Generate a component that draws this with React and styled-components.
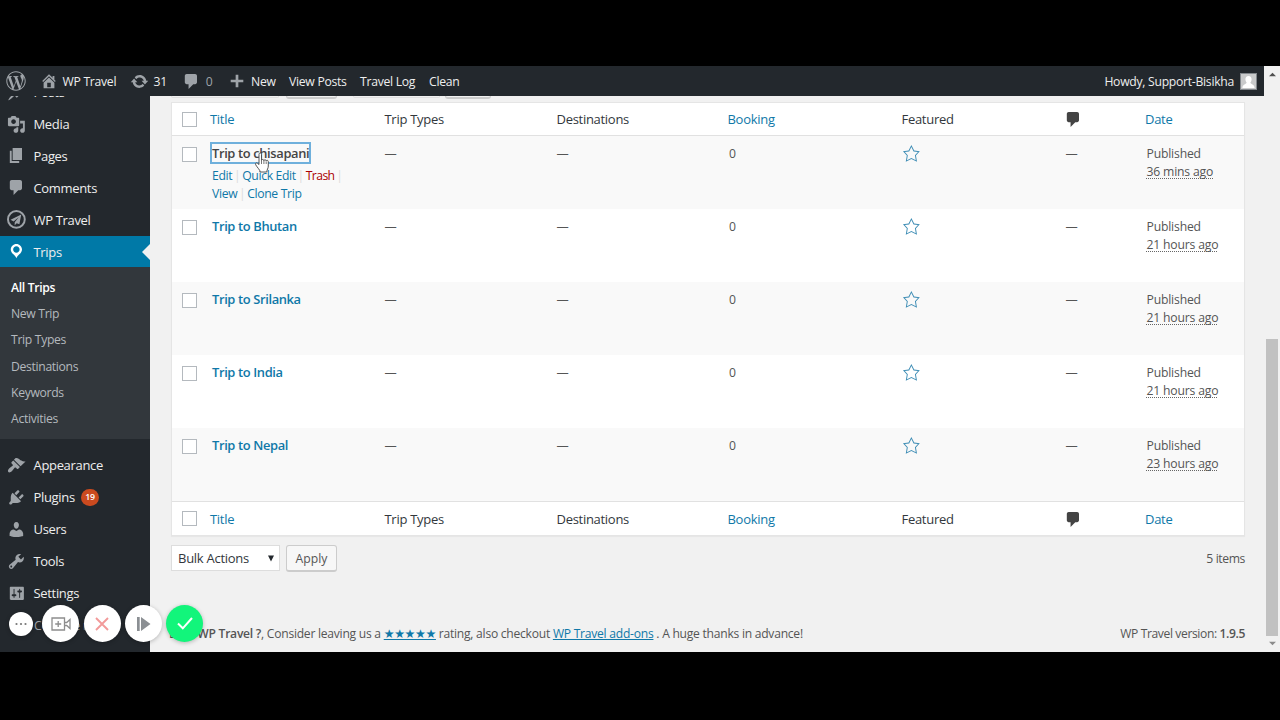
import React from 'react';
import styled, { createGlobalStyle } from 'styled-components';
import { FaWordpressSimple } from 'react-icons/fa';

const icons = {
  home: 'M16 8.5l1.53 1.53-1.06 1.06L10 4.6l-6.47 6.49-1.06-1.06L10 2.5l4 4v-2h2v4zm-6-2.46l6 5.99V18H4v-5.97zM12 17v-5H8v5h4z',
  update: 'M10.2 3.28c3.53 0 6.43 2.61 6.92 6h2.08l-3.5 4-3.5-4h2.32c-.45-1.97-2.21-3.45-4.32-3.45-1.45 0-2.73.71-3.54 1.78L4.95 5.66C6.23 4.2 8.11 3.28 10.2 3.28zm-.4 13.44c-3.52 0-6.43-2.61-6.92-6H.8l3.5-4c1.17 1.33 2.33 2.67 3.5 4H5.48c.45 1.97 2.21 3.45 4.32 3.45 1.45 0 2.73-.71 3.54-1.78l1.71 1.95c-1.28 1.46-3.15 2.38-5.25 2.38z',
  plus: 'M17 8.5v3h-5.5V17h-3v-5.5H3v-3h5.5V3h3v5.5z',
  comments: 'M5 2h9c1.1 0 2 .9 2 2v7c0 1.1-.9 2-2 2h-2l-5 5v-5H5c-1.1 0-2-.9-2-2V4c0-1.1.9-2 2-2z',
  post: 'M10.44 3.02l1.82-1.82 6.36 6.35-1.83 1.82c-1.05-.68-2.48-.57-3.41.36l-.75.75c-.92.93-1.04 2.35-.35 3.41l-1.83 1.82-2.41-2.41-2.8 2.79c-.42.42-3.38 2.71-3.8 2.29s1.86-3.39 2.28-3.81l2.79-2.79L4.1 9.36l1.83-1.82c1.05.69 2.48.57 3.4-.36l.75-.75c.93-.92 1.05-2.35.36-3.41z',
  media: 'M13 11V4c0-.55-.45-1-1-1h-1.67L9 1H5L3.67 3H2c-.55 0-1 .45-1 1v7c0 .55.45 1 1 1h10c.55 0 1-.45 1-1zM7 4.5c1.38 0 2.5 1.12 2.5 2.5S8.38 9.5 7 9.5 4.5 8.38 4.5 7 5.62 4.5 7 4.5zM14 6h5v10.5c0 1.38-1.12 2.5-2.5 2.5S14 17.88 14 16.5s1.12-2.5 2.5-2.5c.17 0 .34.02.5.05V9h-3V6zm-4 8.05V13h2v3.5c0 1.38-1.12 2.5-2.5 2.5S7 17.88 7 16.5 8.12 14 9.5 14c.17 0 .34.02.5.05z',
  page: 'M6 15V2h10v13H6zm-1 1h8v2H3V5h2v11z',
  travel: 'M10 0a10 10 0 1 0 0 20 10 10 0 0 0 0-20zm0 2.1a7.9 7.9 0 1 1 0 15.8 7.9 7.9 0 0 1 0-15.8zM15.2 4.8L3.8 10.5l3.2 1.7 5.5-4.5L8.2 13v3.2l2.2-2.2 2.8 1.3z',
  trips: 'M10 2C6.69 2 4 4.69 4 8c0 2.02 1.17 3.71 2.53 4.89.43.37 1.18.96 1.85 1.83.74.97 1.41 2.01 1.62 2.71.21-.7.88-1.74 1.62-2.71.67-.87 1.42-1.46 1.85-1.83C14.83 11.71 16 10.02 16 8c0-3.31-2.69-6-6-6zm0 2.56c1.9 0 3.44 1.54 3.44 3.44S11.9 11.44 10 11.44 6.56 9.9 6.56 8 8.1 4.56 10 4.56z',
  appearance: 'M14.48 11.06L7.41 3.99l1.5-1.5c.5-.56 2.3-.47 3.51.32 1.21.8 1.43 1.28 2.91 2.1 1.18.64 2.45 1.26 4.45.85zm-.71.71L6.7 4.7 4.93 6.47c-.39.39-.39 1.02 0 1.41l1.06 1.06c.39.39.39 1.03 0 1.42-.6.6-1.43 1.11-2.21 1.69-.35.26-.7.53-1.01.84C1.43 14.23.4 16.08 1.4 17.07c.99 1 2.84-.03 4.18-1.36.31-.31.58-.66.85-1.02.57-.78 1.08-1.61 1.69-2.21.39-.39 1.02-.39 1.41 0l1.06 1.06c.39.39 1.02.39 1.41 0z',
  plugins: 'M13.11 4.36L9.87 7.6 8 5.73l3.24-3.24c.35-.34 1.05-.2 1.56.32.52.51.66 1.21.31 1.55zm-8 1.77l.91-1.12 9.01 9.01-1.19.84c-.71.71-2.63 1.16-3.82 1.16H6.14L4.9 17.26c-.59.59-1.54.59-2.12 0-.59-.58-.59-1.53 0-2.12l1.24-1.24v-3.88c0-1.13.4-3.19 1.09-3.89zm7.26 3.97l3.24-3.24c.34-.35 1.04-.21 1.55.31.52.51.66 1.21.31 1.55l-3.24 3.25z',
  users: 'M10 9.25c-2.27 0-2.73-3.44-2.73-3.44C7 4.02 7.82 2 9.97 2c2.16 0 2.98 2.02 2.71 3.81 0 0-.41 3.44-2.68 3.44zm0 2.57L12.72 10c2.39 0 4.52 2.33 4.52 4.53v2.49s-3.65 1.13-7.24 1.13c-3.65 0-7.24-1.13-7.24-1.13v-2.49c0-2.25 1.94-4.48 4.47-4.48z',
  tools: 'M16.68 9.77c-1.34 1.34-3.3 1.67-4.95.99l-5.41 6.52c-.99.99-2.59.99-3.58 0s-.99-2.59 0-3.57l6.52-5.42c-.68-1.65-.35-3.61.99-4.95 1.28-1.28 3.12-1.62 4.72-1.06l-2.89 2.89 2.82 2.82 2.86-2.87c.53 1.58.18 3.39-1.08 4.65zM3.81 16.21c.4.39 1.04.39 1.43 0 .4-.4.4-1.04 0-1.43-.39-.4-1.03-.4-1.43 0-.39.39-.39 1.03 0 1.43z',
  settings: 'M18 16V4c0-.55-.45-1-1-1H4c-.55 0-1 .45-1 1v12c0 .55.45 1 1 1h13c.55 0 1-.45 1-1zM8 11h1c.55 0 1 .45 1 1s-.45 1-1 1H8v1.5c0 .28-.22.5-.5.5s-.5-.22-.5-.5V13H6c-.55 0-1-.45-1-1s.45-1 1-1h1V5.5c0-.28.22-.5.5-.5s.5.22.5.5V11zm5-2h-1c-.55 0-1-.45-1-1s.45-1 1-1h1V5.5c0-.28.22-.5.5-.5s.5.22.5.5V7h1c.55 0 1 .45 1 1s-.45 1-1 1h-1v5.5c0 .28-.22.5-.5.5s-.5-.22-.5-.5V9z',
  star: 'M10 1L7 7l-6 .75 4.13 4.62L4 19l6-3 6 3-1.12-6.63L19 7.75 13 7zm0 2.24l2.34 4.69 4.65.58-3.18 3.56.87 5.15L10 14.88l-4.68 2.34.87-5.15-3.18-3.56 4.65-.58z',
};

const Icon = ({ name, size = 18.75 }) => (
  <svg width={size} height={size} viewBox="0 0 20 20" fill="currentColor" fillRule="evenodd">
    <path d={icons[name]} />
  </svg>
);

const menuTop = [
  { icon: 'media', label: 'Media' },
  { icon: 'page', label: 'Pages' },
  { icon: 'comments', label: 'Comments' },
  { icon: 'travel', label: 'WP Travel' },
  { icon: 'trips', label: 'Trips', active: true },
];

const submenu = ['All Trips', 'New Trip', 'Trip Types', 'Destinations', 'Keywords', 'Activities'];

const menuBottom = [
  { icon: 'appearance', label: 'Appearance' },
  { icon: 'plugins', label: 'Plugins', count: 19 },
  { icon: 'users', label: 'Users' },
  { icon: 'tools', label: 'Tools' },
  { icon: 'settings', label: 'Settings' },
];

const trips = [
  { title: 'Trip to chisapani', date: '36 mins ago', focused: true },
  { title: 'Trip to Bhutan', date: '21 hours ago' },
  { title: 'Trip to Srilanka', date: '21 hours ago' },
  { title: 'Trip to India', date: '21 hours ago' },
  { title: 'Trip to Nepal', date: '23 hours ago' },
];

const MenuItem = ({ item }) => (
  <MenuRow $active={item.active}>
    <MenuIcon $active={item.active}>
      <Icon name={item.icon} />
    </MenuIcon>
    {item.label}
    {item.count && <Count>{item.count}</Count>}
    {item.active && <Arrow />}
  </MenuRow>
);

const HeadRow = ({ foot }) => (
  <Head $foot={foot}>
    <Check />
    <HeadCell $link>Title</HeadCell>
    <HeadCell>Trip Types</HeadCell>
    <HeadCell>Destinations</HeadCell>
    <HeadCell $link>Booking</HeadCell>
    <HeadCell>Featured</HeadCell>
    <HeadCell>
      <CommentHead>
        <Icon name="comments" size={18.75} />
      </CommentHead>
    </HeadCell>
    <HeadCell $link>Date</HeadCell>
  </Head>
);

const TripRow = ({ trip }) => (
  <Row>
    <Check />
    <TitleCell>
      <TripTitle $focused={trip.focused}>{trip.title}</TripTitle>
      {trip.focused && (
        <Actions>
          <div>
            <a>Edit</a>
            <Bar>|</Bar>
            <a>Quick Edit</a>
            <Bar>|</Bar>
            <Trash>Trash</Trash>
            <Bar>|</Bar>
          </div>
          <div>
            <a>View</a>
            <Bar>|</Bar>
            <a>Clone Trip</a>
          </div>
        </Actions>
      )}
    </TitleCell>
    <Cell>—</Cell>
    <Cell>—</Cell>
    <Cell $inset={1.5}>0</Cell>
    <Cell>
      <Star>
        <Icon name="star" />
      </Star>
    </Cell>
    <Cell>—</Cell>
    <Cell $inset={1.5}>
      Published
      <br />
      <DateText>{trip.date}</DateText>
    </Cell>
  </Row>
);

const App = () => (
  <Page>
    <GlobalStyle />
    <Screen>
      <Main>
        <AdminBar>
          <BarItem $w={39.5} $pad={6} $muted>
            <FaWordpressSimple size={20} />
          </BarItem>
          <BarItem $w={90.5} $gap={5}>
            <Icon name="home" size={18} />
            WP Travel
          </BarItem>
          <BarItem $w={52} $gap={4.5}>
            <Icon name="update" size={19} />
            31
          </BarItem>
          <BarItem $w={46} $gap={5} $muted>
            <Icon name="comments" />
            0
          </BarItem>
          <BarItem $w={61} $gap={5}>
            <Icon name="plus" size={18} />
            New
          </BarItem>
          <BarItem $w={71}>View Posts</BarItem>
          <BarItem $w={69}>Travel Log</BarItem>
          <BarItem>Clean</BarItem>
          <Account>
            Howdy, Support-Bisikha
            <Avatar viewBox="0 0 16 16">
              <rect width="16" height="16" fill="#c9cacb" />
              <path
                d="M8 2c2.2 0 3.3 1.6 3.3 3.5 0 1.7-.7 2.8-1.3 3.6 0 1.6 4.5 2 4.5 5.9h-13c0-3.9 4.5-4.3 4.5-5.9-.6-.8-1.3-1.9-1.3-3.6C4.7 3.6 5.8 2 8 2z"
                fill="#fff"
              />
            </Avatar>
          </Account>
        </AdminBar>
        <Body>
          <Sidebar>
            <Posts>
              <MenuItem item={{ icon: 'post', label: 'Posts' }} />
            </Posts>
            {menuTop.map((item) => (
              <MenuItem item={item} key={item.label} />
            ))}
            <Submenu>
              {submenu.map((label, i) => (
                <SubItem $current={i === 0} key={label}>
                  {label}
                </SubItem>
              ))}
            </Submenu>
            {menuBottom.map((item) => (
              <MenuItem item={item} key={item.label} />
            ))}
            <Collapse>Collapse menu</Collapse>
          </Sidebar>
          <Content>
            <Filters>
              <FilterEdge $w={108} />
              <FilterEdge $w={51} $left={7} $button />
              <FilterEdge $w={87} $left={16} />
              <FilterEdge $w={46} $left={5} $button />
            </Filters>
            <Table>
              <HeadRow />
              {trips.map((trip) => (
                <TripRow trip={trip} key={trip.title} />
              ))}
              <HeadRow foot />
            </Table>
            <BulkBar>
              <Select>
                Bulk Actions
                <svg width="6" height="7" viewBox="0 0 6 7">
                  <path d="M0 .5h6L3 6.5z" fill="#23282d" />
                </svg>
              </Select>
              <Apply>Apply</Apply>
              <Items>5 items</Items>
            </BulkBar>
            <Footer>
              <div>
                Love <b>WP Travel ?</b>, Consider leaving us a <Stars>★★★★★</Stars> rating, also checkout{' '}
                <u>WP Travel add-ons</u> . A huge thanks in advance!
              </div>
              <Version>
                WP Travel version: <b>1.9.5</b>
              </Version>
            </Footer>
          </Content>
        </Body>
      </Main>
      <Scrollbar>
        <svg width="7" height="5" viewBox="0 0 8 5">
          <path d="M0 4.5L4 .5l4 4z" fill="#505050" />
        </svg>
        <Thumb />
        <svg width="7" height="5" viewBox="0 0 8 5">
          <path d="M0 .5h8l-4 4z" fill="#8b8b8b" />
        </svg>
      </Scrollbar>
      <Recorder>
        <Round $size={24}>
          <svg width="12" height="4" viewBox="0 0 12 4" fill="#777">
            <circle cx="1.5" cy="2" r="1.1" />
            <circle cx="6" cy="2" r="1.1" />
            <circle cx="10.5" cy="2" r="1.1" />
          </svg>
        </Round>
        <Round $size={37}>
          <svg width="20" height="14" viewBox="0 0 20 14" fill="none" stroke="#8d8d8d" strokeWidth="1.3">
            <path d="M1 1h12.5v12H1zM7.2 4v6M4.2 7h6M13.5 5.5h2.2l3.3-3v9l-3.3-3h-2.2" />
          </svg>
        </Round>
        <Round $size={37}>
          <svg width="14" height="14" viewBox="0 0 14 14" fill="none" stroke="#f29a9a" strokeWidth="1.9">
            <path d="M1 1l12 12M13 1L1 13" />
          </svg>
        </Round>
        <Round $size={37}>
          <svg width="15" height="14" viewBox="0 0 15 14" fill="#8b8f93">
            <path d="M1 0h2.7v14H1zM5 0l9.5 7L5 14z" />
          </svg>
        </Round>
        <Round $size={37} $green>
          <svg width="16" height="13" viewBox="0 0 16 13" fill="none" stroke="#fff" strokeWidth="2">
            <path d="M1 6.5l4.8 4.8L15 1" />
          </svg>
        </Round>
      </Recorder>
      <Pointer viewBox="0 0 16 22">
        <path
          d="M5 12.5V2.5c0-2 2.5-2 2.5 0v6c0-1.5 2.3-1.5 2.4.2 0-1.3 2.2-1.3 2.3.4.2-1.2 2.1-1 2.1.6V14c0 2.5-1.5 3.5-1.5 6H6.2c0-2-3-4.5-4.5-7.2-.8-1.6.8-2.5 1.9-1.4z"
          fill="#fff"
          stroke="#444"
          strokeWidth=".9"
        />
        <path d="M7.5 8.5V12M9.9 9v3M12.2 9.5V12" stroke="#555" strokeWidth=".8" />
      </Pointer>
    </Screen>
  </Page>
);

const GlobalStyle = createGlobalStyle`
  body {
    margin: 0;
    background: #000;
  }
  * {
    box-sizing: border-box;
  }
  svg {
    display: block;
    flex-shrink: 0;
  }
`;

const Page = styled.div`
  height: 720px;
  padding: 66px 0 68px;
  overflow: hidden;
  background: #000;
  font-family: 'Open Sans', 'Noto Sans', sans-serif;
`;

const Screen = styled.div`
  position: relative;
  display: flex;
  height: 586px;
  overflow: hidden;
  background: #f1f1f1;
`;

const Main = styled.div`
  width: 1264px;
  display: flex;
  flex-direction: column;
`;

const AdminBar = styled.div`
  display: flex;
  height: 30px;
  flex-shrink: 0;
  background: #23282d;
  color: #eee;
  font-size: 12.2px;
  letter-spacing: -0.28px;
`;

const BarItem = styled.div`
  display: flex;
  align-items: center;
  gap: ${({ $gap }) => $gap || 0}px;
  width: ${({ $w }) => ($w ? `${$w}px` : 'auto')};
  padding-left: ${({ $pad }) => $pad || 0}px;
  white-space: nowrap;
  color: ${({ $muted }) => ($muted ? '#9ea3a8' : '#eee')};
  svg {
    color: #9ea3a8;
  }
`;

const Account = styled.div`
  display: flex;
  align-items: center;
  gap: 6px;
  margin-left: auto;
  padding-right: 7px;
`;

const Avatar = styled.svg`
  width: 17px;
  height: 17px;
  border: 1px solid #82878c;
`;

const Body = styled.div`
  display: flex;
  height: 556px;
`;

const Sidebar = styled.div`
  width: 150px;
  height: 556px;
  overflow: hidden;
  background: #23282d;
`;

const Posts = styled.div`
  display: flex;
  align-items: flex-end;
  height: 12px;
  overflow: hidden;
`;

const MenuRow = styled.div`
  position: relative;
  display: flex;
  align-items: center;
  flex-shrink: 0;
  width: 150px;
  height: 31.9px;
  background: ${({ $active }) => ($active ? '#0079a7' : 'transparent')};
  color: #eee;
  font-size: 13px;
  letter-spacing: -0.33px;
`;

const MenuIcon = styled.div`
  width: 33.5px;
  padding-left: 7px;
  color: ${({ $active }) => ($active ? '#fff' : '#9ea3a8')};
`;

const Count = styled.span`
  height: 17px;
  margin-left: 6px;
  padding: 0 4.5px;
  border-radius: 9px;
  background: #ca4a1f;
  color: #fff;
  font-size: 8.8px;
  font-weight: 600;
  line-height: 17px;
  letter-spacing: -0.2px;
`;

const Arrow = styled.div`
  position: absolute;
  right: 0;
  top: 8px;
  border: 8px solid transparent;
  border-right-color: #f1f1f1;
  border-left-width: 0;
`;

const Submenu = styled.div`
  height: 171.5px;
  margin-bottom: 10.5px;
  padding-top: 7.5px;
  background: #32373c;
`;

const SubItem = styled.div`
  height: 26.25px;
  padding-left: 11px;
  color: ${({ $current }) => ($current ? '#fff' : '#b4b9be')};
  font-size: 12.2px;
  font-weight: ${({ $current }) => ($current ? 600 : 400)};
  line-height: 26.5px;
  letter-spacing: -0.33px;
`;

const Collapse = styled.div`
  padding-left: 34px;
  color: #a0a5aa;
  font-size: 12.2px;
  line-height: 33px;
  letter-spacing: -0.25px;
`;

const Content = styled.div`
  width: 1114px;
  height: 556px;
  padding: 0 19px 0 21px;
  color: #555;
  font-size: 12.2px;
`;

const Filters = styled.div`
  display: flex;
  height: 6px;
  align-items: flex-start;
`;

const FilterEdge = styled.div`
  width: ${({ $w }) => $w}px;
  height: ${({ $button }) => ($button ? 3 : 2)}px;
  margin-left: ${({ $left }) => $left || 0}px;
  border: 1px solid ${({ $button }) => ($button ? '#ccc' : '#e0e0e0')};
  border-top: 0;
  border-bottom-width: ${({ $button }) => ($button ? 2 : 1)}px;
  border-radius: 0 0 3px 3px;
`;

const Table = styled.div`
  width: 1074px;
  border: 1px solid #e5e5e5;
  background: #fff;
  box-shadow: 0 1px 1px rgba(0, 0, 0, 0.04);
`;

const columns = `
  display: grid;
  grid-template-columns: 38px 174.5px 172px 171px 174px 164px 79.5px 1fr;
`;

const Head = styled.div`
  ${columns}
  align-items: center;
  height: ${({ $foot }) => ($foot ? 34 : 33)}px;
  border-${({ $foot }) => ($foot ? 'top' : 'bottom')}: 1px solid #e1e1e1;
`;

const HeadCell = styled.div`
  color: ${({ $link }) => ($link ? '#0f78a8' : '#32373c')};
  font-size: 13px;
  letter-spacing: -0.29px;
`;

const CommentHead = styled.div`
  margin-left: -1.5px;
  color: #444;
`;

const Row = styled.div`
  ${columns}
  height: 73.1px;
  padding-top: 9px;
  &:nth-child(even) {
    background: #f9f9f9;
  }
  & > div:first-child {
    margin-top: 2px;
  }
`;

const Check = styled.div`
  width: 15px;
  height: 15px;
  margin-left: 10px;
  border: 1px solid #b4b9be;
  background: #fff;
`;

const Cell = styled.div`
  padding-left: ${({ $inset }) => $inset || 0}px;
  line-height: 18px;
  letter-spacing: -0.18px;
`;

const TitleCell = styled(Cell)`
  margin-top: -1px;
  padding-left: 2px;
`;

const TripTitle = styled.span`
  color: ${({ $focused }) => ($focused ? '#444' : '#0f78a8')};
  outline: ${({ $focused }) => ($focused ? '2px solid #6fb0dc' : 'none')};
  outline-offset: -0.5px;
  font-size: 12.9px;
  font-weight: 600;
  letter-spacing: -0.36px;
`;

const Actions = styled.div`
  padding-top: 4px;
  color: #0f78a8;
  white-space: nowrap;
  letter-spacing: -0.35px;
`;

const Bar = styled.span`
  margin: 0 1.8px;
  color: #ddd;
`;

const Trash = styled.a`
  color: #a00;
  letter-spacing: -0.6px;
`;

const Star = styled.div`
  margin-top: -1px;
  color: #3e8db5;
`;

const DateText = styled.span`
  text-decoration: underline dotted 1px #666;
  text-decoration-skip-ink: none;
  text-underline-offset: 2px;
`;

const BulkBar = styled.div`
  display: flex;
  align-items: center;
  height: 27px;
  margin-top: 8.5px;
`;

const Select = styled.div`
  display: flex;
  align-items: center;
  justify-content: space-between;
  width: 109px;
  height: 26px;
  padding: 0 5.5px 0 6px;
  border: 1px solid #ddd;
  background: #fff;
  color: #32373c;
  font-size: 13px;
  letter-spacing: -0.27px;
`;

const Apply = styled.div`
  width: 51px;
  height: 27px;
  margin-left: 6px;
  border: 1px solid #ccc;
  border-bottom-width: 2px;
  border-radius: 3px;
  background: #f7f7f7;
  font-size: 12.2px;
  line-height: 25px;
  text-align: center;
`;

const Items = styled.div`
  margin-left: auto;
  letter-spacing: -0.4px;
`;

const Footer = styled.div`
  display: flex;
  justify-content: space-between;
  margin: 52.5px 0 0 -2px;
  font-size: 12.1px;
  line-height: 19px;
  letter-spacing: -0.25px;
  white-space: nowrap;
  b {
    font-weight: 600;
  }
  u {
    color: #0f78a8;
  }
`;

const Stars = styled.u`
  font-family: 'DejaVu Sans', sans-serif;
  letter-spacing: -0.4px;
`;

const Version = styled.div`
  letter-spacing: -0.38px;
`;

const Scrollbar = styled.div`
  display: flex;
  flex-direction: column;
  align-items: center;
  width: 16px;
  height: 586px;
  padding: 6px 0;
  background: #f1f1f1;
`;

const Thumb = styled.div`
  width: 12px;
  height: 297px;
  margin: 262px 0 5px;
  background: #c1c1c1;
`;

// floating screen recorder controls
const Recorder = styled.div`
  position: absolute;
  left: 9px;
  top: 539px;
  display: flex;
  align-items: center;
  gap: 4.3px;
  & > div:first-child {
    margin-right: 5px;
  }
`;

const Round = styled.div`
  display: flex;
  align-items: center;
  justify-content: center;
  width: ${({ $size }) => $size}px;
  height: ${({ $size }) => $size}px;
  border-radius: 50%;
  background: ${({ $green }) => ($green ? '#12f57b' : '#fff')};
  box-shadow: 0 1px 4px rgba(0, 0, 0, 0.25);
`;

const Pointer = styled.svg`
  position: absolute;
  left: 254px;
  top: 86px;
  width: 16px;
  height: 22px;
`;

export default App;
